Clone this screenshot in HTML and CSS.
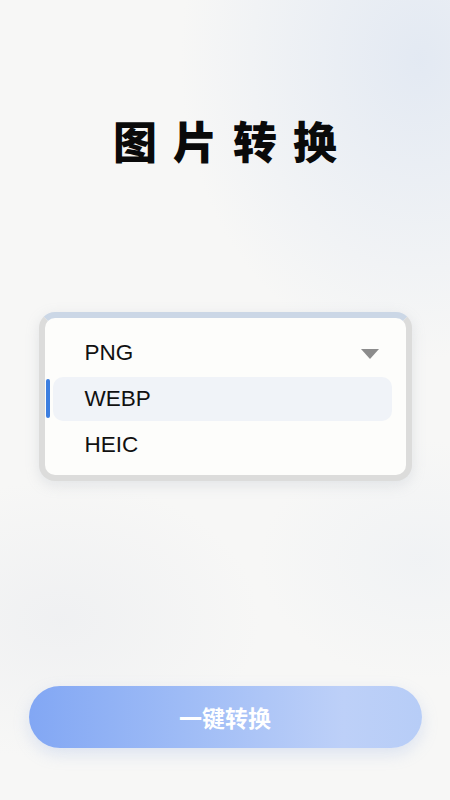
FILE: index.html
```html
<!DOCTYPE html>
<html lang="zh">
<head>
<meta charset="utf-8">
<title>图片转换</title>
<link rel="stylesheet" href="styles.css">
</head>
<body>
<main class="page">
  <h1 class="title">图片转换</h1>
  <section class="card">
    <div class="card-inner">
      <div class="row">
        <span>PNG</span>
        <svg class="arrow" width="18" height="10" viewBox="0 0 18 10"><path d="M0 0H18L9 10Z" fill="#8c8c8c"/></svg>
      </div>
      <div class="row selected"><span class="bar"></span><span>WEBP</span></div>
      <div class="row"><span>HEIC</span></div>
    </div>
  </section>
  <button class="convert">一键转换</button>
</main>
</body>
</html>
```
FILE: styles.css
```css
html, body {
  margin: 0;
  padding: 0;
}
body {
  width: 450px;
  height: 800px;
  overflow: hidden;
  background:
    radial-gradient(ellipse 240px 300px at 420px 60px, rgba(222,230,242,0.8), rgba(222,230,242,0) 100%),
    radial-gradient(ellipse 200px 140px at 60px 620px, rgba(232,234,238,0.5), rgba(232,234,238,0) 100%),
    radial-gradient(ellipse 160px 120px at 420px 560px, rgba(234,238,243,0.5), rgba(234,238,243,0) 100%),
    #f7f7f6;
  font-family: "Liberation Sans", Arial, "Noto Sans CJK SC", sans-serif;
}
.page {
  height: 800px;
  display: flex;
  flex-direction: column;
  align-items: center;
}
.title {
  margin: 116px 0 0;
  padding-left: 16px;
  font-family: "Noto Sans CJK SC", sans-serif;
  font-weight: 900;
  font-size: 44px;
  line-height: 48px;
  letter-spacing: 16px;
  color: #0a0a0a;
}
.card {
  margin-top: 148px;
  width: 373px;
  box-sizing: border-box;
  border: 6px solid #dcdcdb;
  border-top-color: #cbd7e6;
  border-radius: 16px;
  background: #fdfdfb;
  box-shadow: 0 4px 14px rgba(150,160,175,0.22);
}
.card-inner {
  padding: 13px 14px 8px 8px;
  display: flex;
  flex-direction: column;
  gap: 2px;
}
.row {
  position: relative;
  height: 44px;
  display: flex;
  align-items: center;
  justify-content: space-between;
  padding: 0 13px 0 32px;
  font-size: 22.5px;
  color: #111;
  border-radius: 10px;
}
.row.selected {
  background: #f0f3f8;
  justify-content: flex-start;
}
.bar {
  position: absolute;
  left: -7px;
  top: 2px;
  width: 4px;
  height: 39px;
  border-radius: 2px;
  background: #3d7fe0;
}
.arrow {
  margin-top: 2px;
}
.convert {
  margin-top: auto;
  margin-bottom: 52px;
  width: 393px;
  height: 62px;
  border: none;
  border-radius: 31px;
  background: linear-gradient(90deg, #82a7f4 0%, #9fbcf6 40%, #bdd0f8 80%, #b7cdf7 100%);
  box-shadow: 0 6px 16px rgba(150,175,225,0.28);
  color: #ffffff;
  font-family: "Noto Sans CJK SC", sans-serif;
  font-weight: 700;
  font-size: 23px;
}
```
